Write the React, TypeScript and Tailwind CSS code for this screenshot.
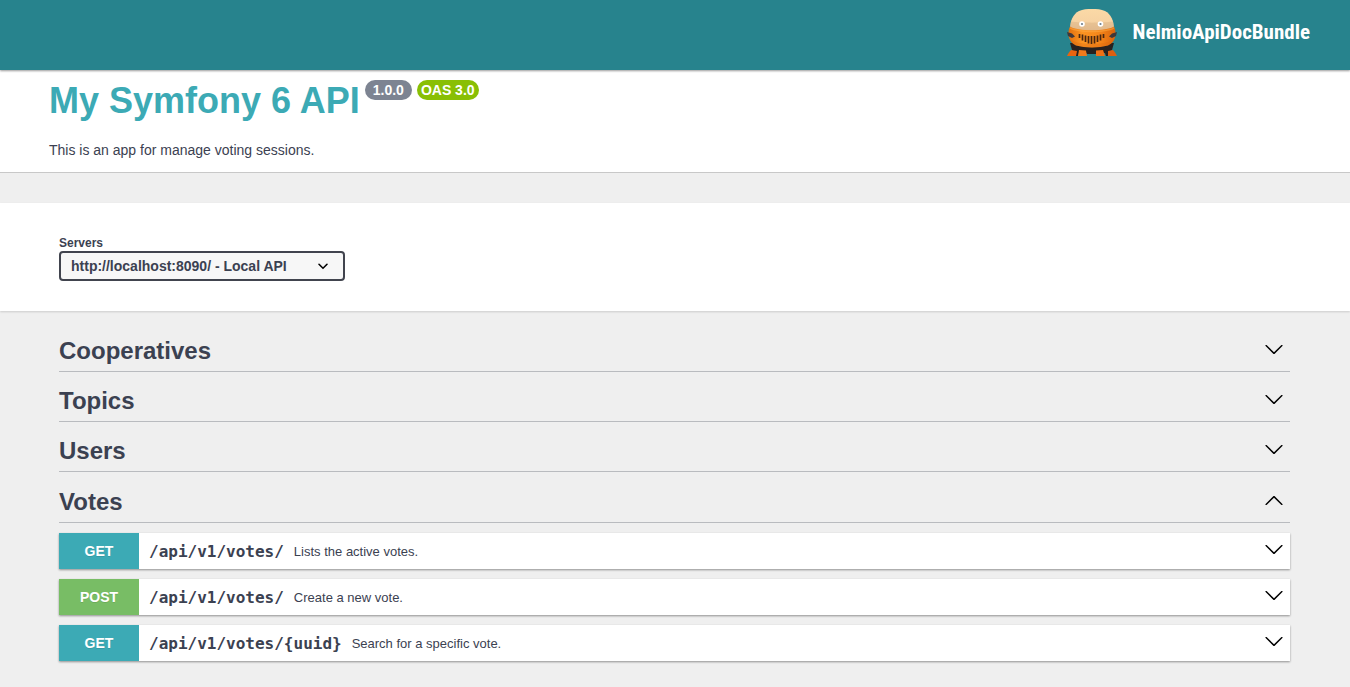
import { useState } from "react"

type Operation = {
    method: "GET" | "POST"
    path: string
    summary: string
}

type Tag = {
    name: string
    operations: Operation[]
}

const METHOD_COLORS: Record<Operation["method"], string> = {
    GET: "bg-[#3caab5]",
    POST: "bg-[#78bd65]",
}

const SERVERS = ["http://localhost:8090/ - Local API"]

const TAGS: Tag[] = [
    { name: "Cooperatives", operations: [] },
    { name: "Topics", operations: [] },
    { name: "Users", operations: [] },
    {
        name: "Votes",
        operations: [
            { method: "GET", path: "/api/v1/votes/", summary: "Lists the active votes." },
            { method: "POST", path: "/api/v1/votes/", summary: "Create a new vote." },
            { method: "GET", path: "/api/v1/votes/{uuid}", summary: "Search for a specific vote." },
        ],
    },
]

const ARROW_DOWN =
    "M17.418 6.109c.272-.268.709-.268.979 0s.271.701 0 .969l-7.908 7.83c-.27.268-.707.268-.979 0l-7.908-7.83c-.27-.268-.27-.701 0-.969.271-.268.709-.268.979 0L10 13.25l7.418-7.141z"
const ARROW_UP =
    "M17.418 14.908c.272.268.709.268.979 0s.271-.701 0-.969l-7.908-7.83c-.27-.268-.707-.268-.979 0l-7.908 7.83c-.27.268-.27.701 0 .969.271.268.709.268.979 0L10 7.767l7.418 7.141z"

function Arrow({ open = false }: { open?: boolean }) {
    return (
        <svg viewBox="0 0 20 20" className="size-5 shrink-0" aria-hidden="true">
            <path d={open ? ARROW_UP : ARROW_DOWN} />
        </svg>
    )
}

function Robot() {
    return (
        <svg viewBox="0 0 50 47" className="h-[47px] w-[50px]" aria-hidden="true">
            <defs>
                <linearGradient id="head" x1="0" y1="0" x2="0" y2="1">
                    <stop offset="0" stopColor="#fbd9a6" />
                    <stop offset="0.5" stopColor="#f7d3a3" />
                    <stop offset="1" stopColor="#e6c096" />
                </linearGradient>
                <linearGradient id="body" x1="0" y1="0" x2="1" y2="0">
                    <stop offset="0" stopColor="#e0700f" />
                    <stop offset="0.3" stopColor="#fb9422" />
                    <stop offset="0.65" stopColor="#f5861a" />
                    <stop offset="1" stopColor="#d9640c" />
                </linearGradient>
            </defs>
            {/* base and legs */}
            <path d="M3 34h44l-2 7-5 3H10l-5-3z" fill="#28211f" />
            <path d="M8 41h5l-2 6H8zM18 42h14l-2 3H20zM37 41h5v6h-3z" fill="#28211f" />
            <path d="M4 41l6 1-1 5H0c1-2 2-4 4-6z" fill="#e9640f" />
            <path d="M12 41l7 .5 1 5.500h-9z" fill="#f07a1b" />
            <path d="M29 41.500l7-.5 2 6h-9z" fill="#ee6f15" />
            <path d="M41 42l5-1c2 2 3 4 4 6h-9z" fill="#dc5f10" />
            {/* head */}
            <path d="M3 20C3 12 6 5 12 2c4-1.800 8-2 13-2s9 .2 13 2c6 3 9 10 9 18-8 5-36 5-44 0z" fill="url(#head)" />
            <path d="M4 12.500c10 1.500 32 1.500 42 0l1 7c-8 5-36 5-44 0z" fill="#d2a678" opacity="0.35" />
            {/* body */}
            <path
                d="M3 17.500c8 5 36 5 44 0 2 4 2 9 .5 12.500-1.500 3.500-3.500 5-6.500 6.500-10 2.500-22 2.500-32 0-3-1.500-5-3-6.500-6.500C1 26.500 1 21.500 3 17.500z"
                fill="url(#body)"
            />
            <path d="M3 18c8 5 36 5 44 0l.5 1.500c-9 5-36 5-45 0z" fill="#ffae45" opacity="0.5" />
            <path
                d="M3 30.500c10 6 34 6 44 0-1 3-3 4.500-6 6-10 2.500-22 2.500-32 0-3-1.500-5-3-6-6z"
                fill="#d8640c"
                opacity="0.3"
            />
            {/* eyes */}
            <circle cx="15" cy="15" r="2.800" fill="#fff" />
            <circle cx="33.500" cy="15" r="2.800" fill="#fff" />
            <circle cx="15" cy="15" r="1.100" fill="#6d7f8e" />
            <circle cx="33.500" cy="15" r="1.100" fill="#6d7f8e" />
            {/* side bolts */}
            <path d="M0 23l5 1.500 3 3-3 1.500-4-2z" fill="#40383a" />
            <path d="M50 23l-5 1.500-3 3 3 1.500 4-2z" fill="#40383a" />
            {/* grille */}
            <path
                d="M12.500 25v4M15.500 25.500v6M18.500 26.500v6.500M21.500 27v7.500M24.500 27v8M27.500 27v7.500M30.500 26.500v6.500M33.500 25.500v6M36.500 25v4"
                stroke="#4a2710"
                strokeWidth="1.700"
            />
        </svg>
    )
}

function OperationRow({ method, path, summary }: Operation) {
    return (
        <button
            type="button"
            className="flex h-9 w-full cursor-pointer items-center bg-white pr-1.5 text-left shadow-[0_1px_2px_rgba(0,0,0,0.4)]"
        >
            <span
                className={`flex h-9 w-20 shrink-0 items-center justify-center text-sm font-bold text-white [text-shadow:0_1px_0_rgba(0,0,0,0.1)] ${METHOD_COLORS[method]}`}
            >
                {method}
            </span>
            <span className="flex flex-1 items-center pt-0.5">
                <span className="px-2.5 font-['DejaVu_Sans_Mono',monospace] text-base font-semibold">{path}</span>
                <span className="text-[13px]">{summary}</span>
            </span>
            <span className="pb-1">
                <Arrow />
            </span>
        </button>
    )
}

function TagSection({ tag, open, onToggle }: { tag: Tag; open: boolean; onToggle: () => void }) {
    return (
        <section className={open ? "pt-px" : ""}>
            <h3 className="border-b border-[#3b4151]/30 text-2xl font-bold">
                <button
                    type="button"
                    aria-expanded={open}
                    onClick={onToggle}
                    className="flex h-[45px] w-full cursor-pointer items-center justify-between pt-1 pr-1.5 text-left"
                >
                    <span>{tag.name}</span>
                    <span className="flex pb-1">
                        <Arrow open={open} />
                    </span>
                </button>
            </h3>
            {open && tag.operations.length > 0 && (
                <div className="flex flex-col gap-2.5 pt-2.5">
                    {tag.operations.map((op) => (
                        <OperationRow key={op.method + op.path} {...op} />
                    ))}
                </div>
            )}
        </section>
    )
}

export default function App() {
    const [openTags, setOpenTags] = useState<Record<string, boolean>>({ Votes: true })

    const toggleTag = (name: string) => {
        setOpenTags((prev) => ({ ...prev, [name]: !prev[name] }))
    }

    return (
        <div className="min-h-screen bg-[#efefef] font-['Liberation_Sans',Arial,sans-serif] text-[#3b4151]">
            <header className="relative flex h-[70px] justify-end bg-[#27838d] pt-[9px] pr-10 shadow-[0_1px_2px_rgba(0,0,0,0.4)]">
                <a href="#" className="flex h-[47px] items-center gap-4 text-white">
                    <Robot />
                    <span className="font-['Roboto_Condensed','Noto_Sans_CJK_SC',sans-serif] text-[21px] font-bold">
                        NelmioApiDocBundle
                    </span>
                </a>
            </header>

            {/* API info */}
            <div className="border-b border-[#c8c8c8] bg-white px-[49px] pt-2 pb-3">
                <div className="flex items-start gap-[5px]">
                    <h1 className="text-4xl leading-[46px] font-bold text-[#3caab5]">My Symfony 6 API</h1>
                    <span className="mt-0.5 rounded-full bg-[#7d8492] px-2 text-sm font-bold text-white">1.0.0</span>
                    <span className="mt-0.5 rounded-full bg-[#89bf04] px-1 text-sm font-bold text-white">OAS 3.0</span>
                </div>
                <p className="mt-4 text-sm">This is an app for manage voting sessions.</p>
            </div>

            {/* Server selection */}
            <div className="mt-[30px] bg-white px-[59px] py-[30px] shadow-[0_1px_2px_rgba(0,0,0,0.15)]">
                <label htmlFor="servers" className="block pt-0.5 text-xs font-bold">
                    Servers
                </label>
                <div className="relative w-[286px]">
                    <select
                        id="servers"
                        className="block h-[30px] w-full appearance-none rounded border-2 border-[#41444e] bg-[#f7f7f7] pr-10 pl-2.5 text-sm font-bold"
                    >
                        {SERVERS.map((server) => (
                            <option key={server}>{server}</option>
                        ))}
                    </select>
                    <svg
                        viewBox="0 0 20 20"
                        className="pointer-events-none absolute top-[5px] right-3 size-5"
                        aria-hidden="true"
                    >
                        <path
                            d="M6 8.300L10 12.200l4-3.900"
                            fill="none"
                            stroke="#000"
                            strokeWidth="1.600"
                            strokeLinecap="round"
                        />
                    </svg>
                </div>
            </div>

            <main className="flex flex-col gap-1 pt-[15px] pr-[60px] pb-6 pl-[59px]">
                {TAGS.map((tag) => (
                    <TagSection key={tag.name} tag={tag} open={!!openTags[tag.name]} onToggle={() => toggleTag(tag.name)} />
                ))}
            </main>
        </div>
    )
}
